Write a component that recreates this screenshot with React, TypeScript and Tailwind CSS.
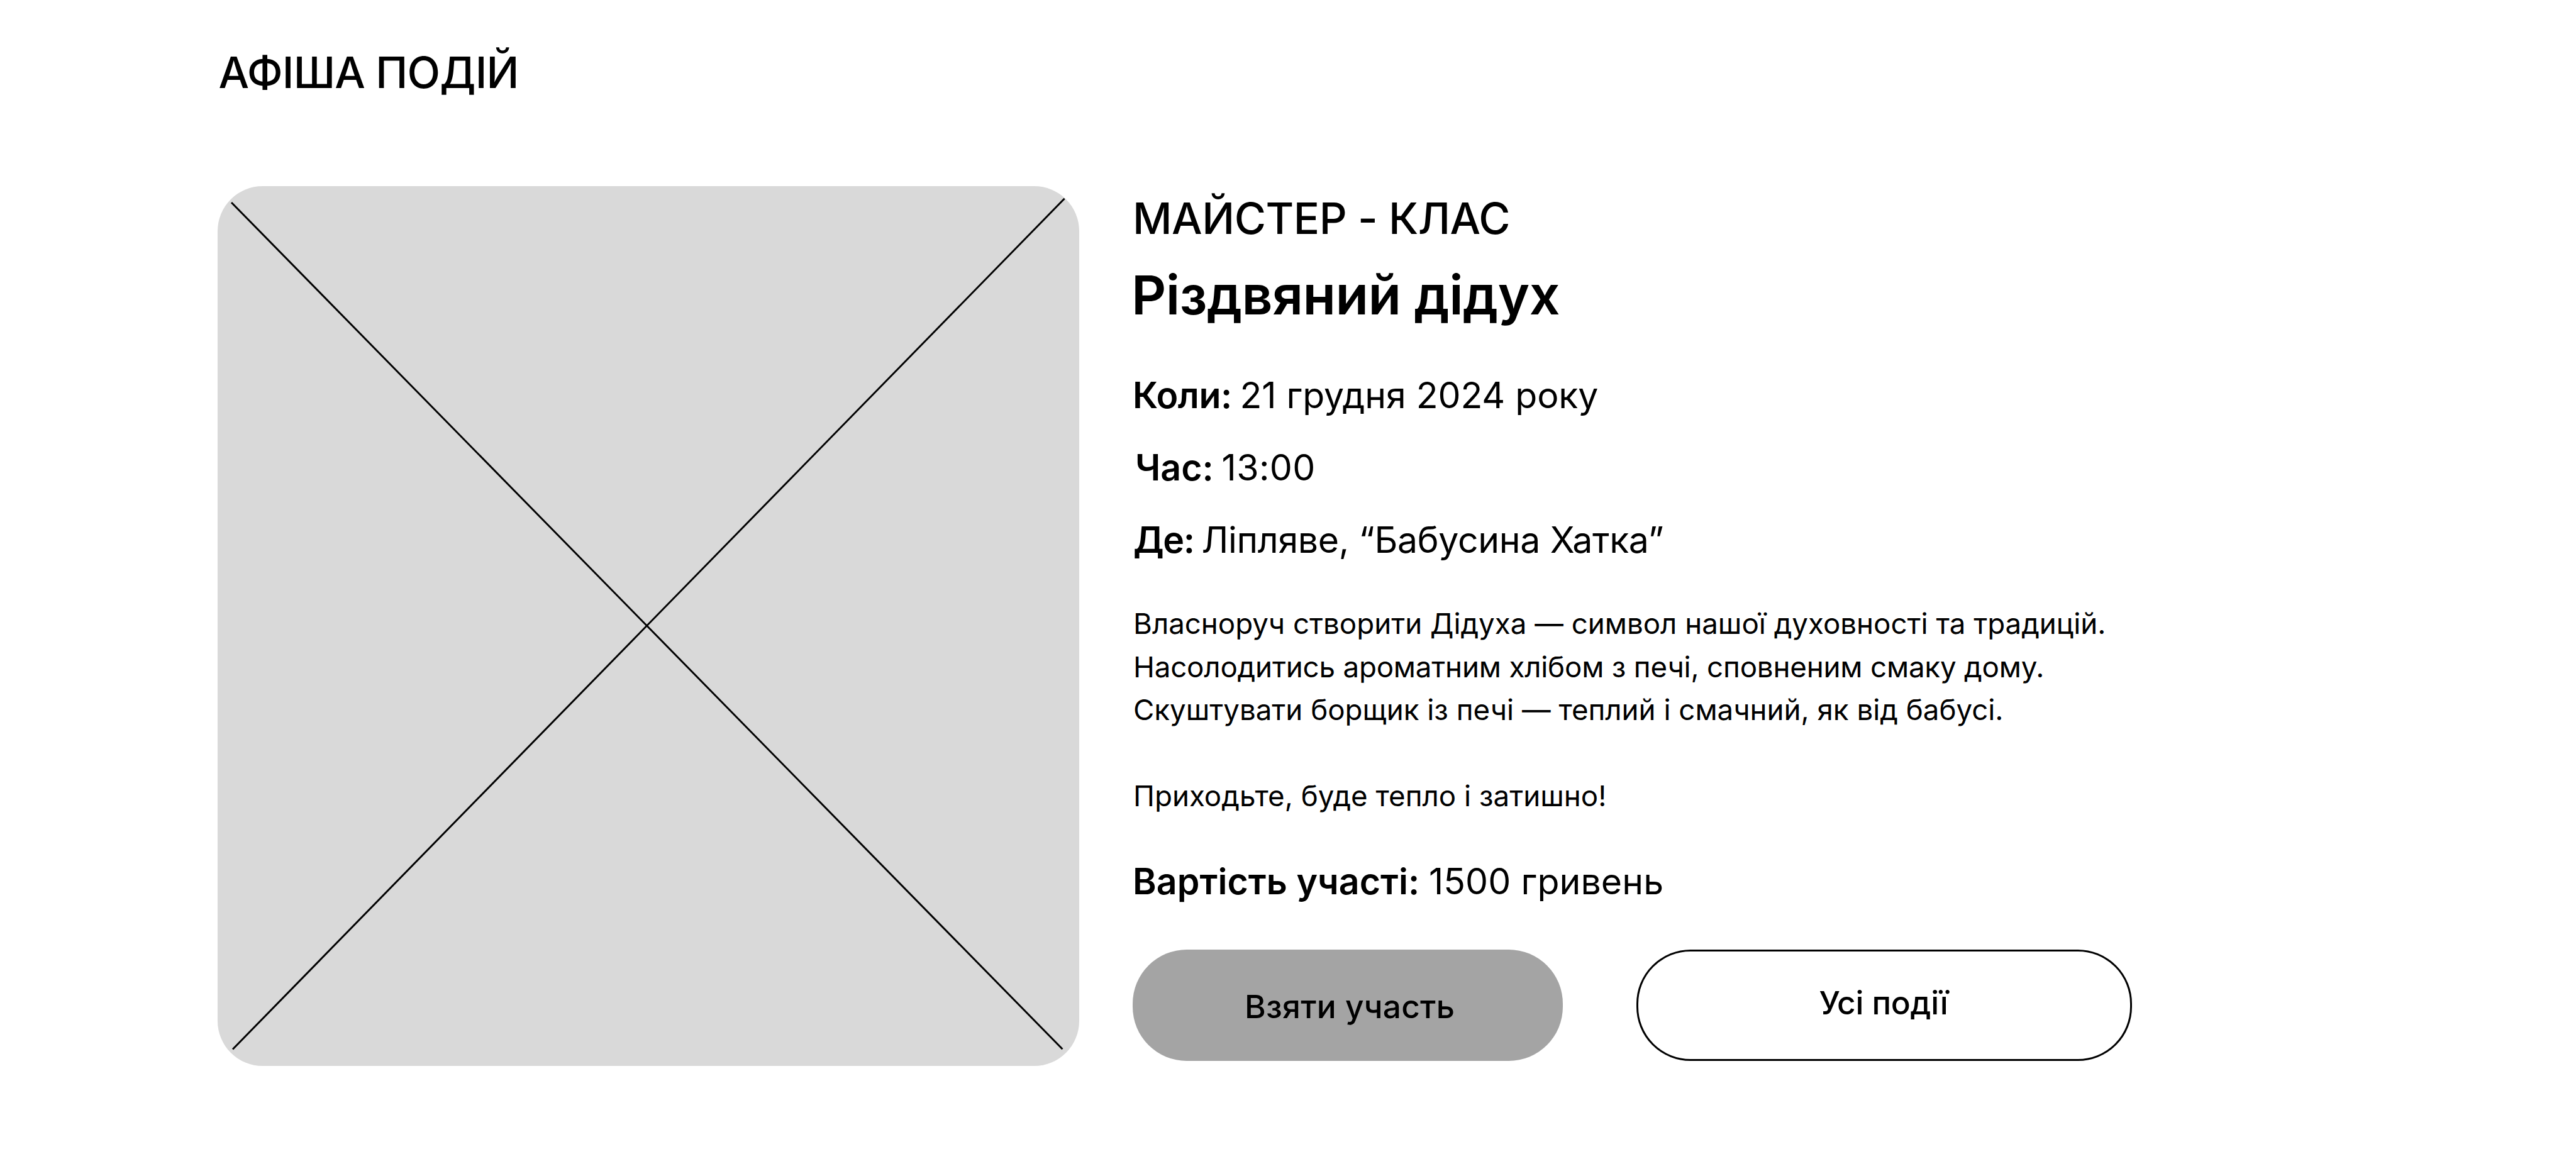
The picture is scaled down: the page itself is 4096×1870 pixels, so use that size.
import React from "react";

interface Detail {
  label: string;
  value: string;
  rowClass: string;
  labelClass: string;
  valueClass: string;
}

const details: Detail[] = [
  {
    label: "Коли:",
    value: "21 грудня 2024 року",
    rowClass: "",
    labelClass: "tracking-[-0.45px] [word-spacing:-1.3px]",
    valueClass: "tracking-[-0.08px]",
  },
  {
    label: "Час:",
    value: "13:00",
    rowClass: "pl-[4px]",
    labelClass: "[word-spacing:-1.6px]",
    valueClass: "tracking-[0.4px]",
  },
  {
    label: "Де:",
    value: "Ліпляве, “Бабусина Хатка”",
    rowClass: "pl-px",
    labelClass: "tracking-[-1.4px] [word-spacing:-1px]",
    valueClass: "tracking-[-0.34px]",
  },
];

const ImagePlaceholder: React.FC = () => (
  <div className="h-[1398.6px] w-[1370px] shrink-0 rounded-[71.5px] bg-[#d9d9d9]">
    <svg
      className="h-full w-full"
      viewBox="0 0 1370 1398.6"
      stroke="black"
      strokeWidth="2.9"
    >
      <line x1="22" y1="26" x2="1343.4" y2="1372.3" />
      <line x1="1346.6" y1="19.8" x2="24" y2="1372.5" />
    </svg>
  </div>
);

const App: React.FC = () => {
  return (
    <div className="h-[1870px] w-[4096px] overflow-hidden bg-white pl-[345.5px] pt-[74px] font-['Inter',sans-serif] text-black">
      <h1 className="pl-[2px] text-[68.6px] font-medium leading-[84px] tracking-[-0.87px]">
        АФІША ПОДІЙ
      </h1>

      <div className="mt-[138px] flex">
        <ImagePlaceholder />

        <div className="ml-[85.5px] pt-[10px]">
          <p className="text-[68.6px] font-medium leading-[84px] tracking-[-0.48px]">
            МАЙСТЕР - КЛАС
          </p>
          <h2 className="-ml-[2px] mt-[26.5px] text-[85.8px] font-semibold leading-[104px] tracking-[-0.55px]">
            Різдвяний дідух
          </h2>

          <div className="mt-[73px] flex flex-col gap-[45px] text-[57.2px] leading-[70px]">
            {details.map(({ label, value, rowClass, labelClass, valueClass }) => (
              <p key={label} className={rowClass}>
                <span className={`font-semibold ${labelClass}`}>{label} </span>
                <span className={valueClass}>{value}</span>
              </p>
            ))}
          </div>

          <div className="ml-px mt-[64.7px] text-[45.7px] leading-[68.5px]">
            <p className="tracking-[-0.015px]">
              Власноруч створити Дідуха — символ нашої духовності та традицій.
            </p>
            <p className="tracking-[-0.195px]">
              Насолодитись ароматним хлібом з печі, сповненим смаку дому.
            </p>
            <p className="tracking-[-0.02px]">
              Скуштувати борщик із печі — теплий і смачний, як від бабусі.
            </p>
            <p className="mt-[68.5px]">Приходьте, буде тепло і затишно!</p>
          </div>

          <p className="mt-[66px] text-[57.2px] leading-[70px] tracking-[0.08px]">
            <span className="font-semibold">Вартість участі: </span>
            1500 гривень
          </p>

          <div className="mt-[73px] flex gap-[117.4px] text-[51.4px] font-medium">
            <button
              className="h-[177px] w-[684px] rounded-[86px] bg-[#a4a4a4] pl-[178px] pt-[4px] text-left tracking-[0.25px]"
              type="button"
            >
              Взяти участь
            </button>
            <button
              className="h-[177px] w-[788px] rounded-[86px] border-[3px] border-black pb-[8px] pl-[287px] text-left tracking-[-0.3px]"
              type="button"
            >
              Усі події
            </button>
          </div>
        </div>
      </div>
    </div>
  );
};

export default App;
